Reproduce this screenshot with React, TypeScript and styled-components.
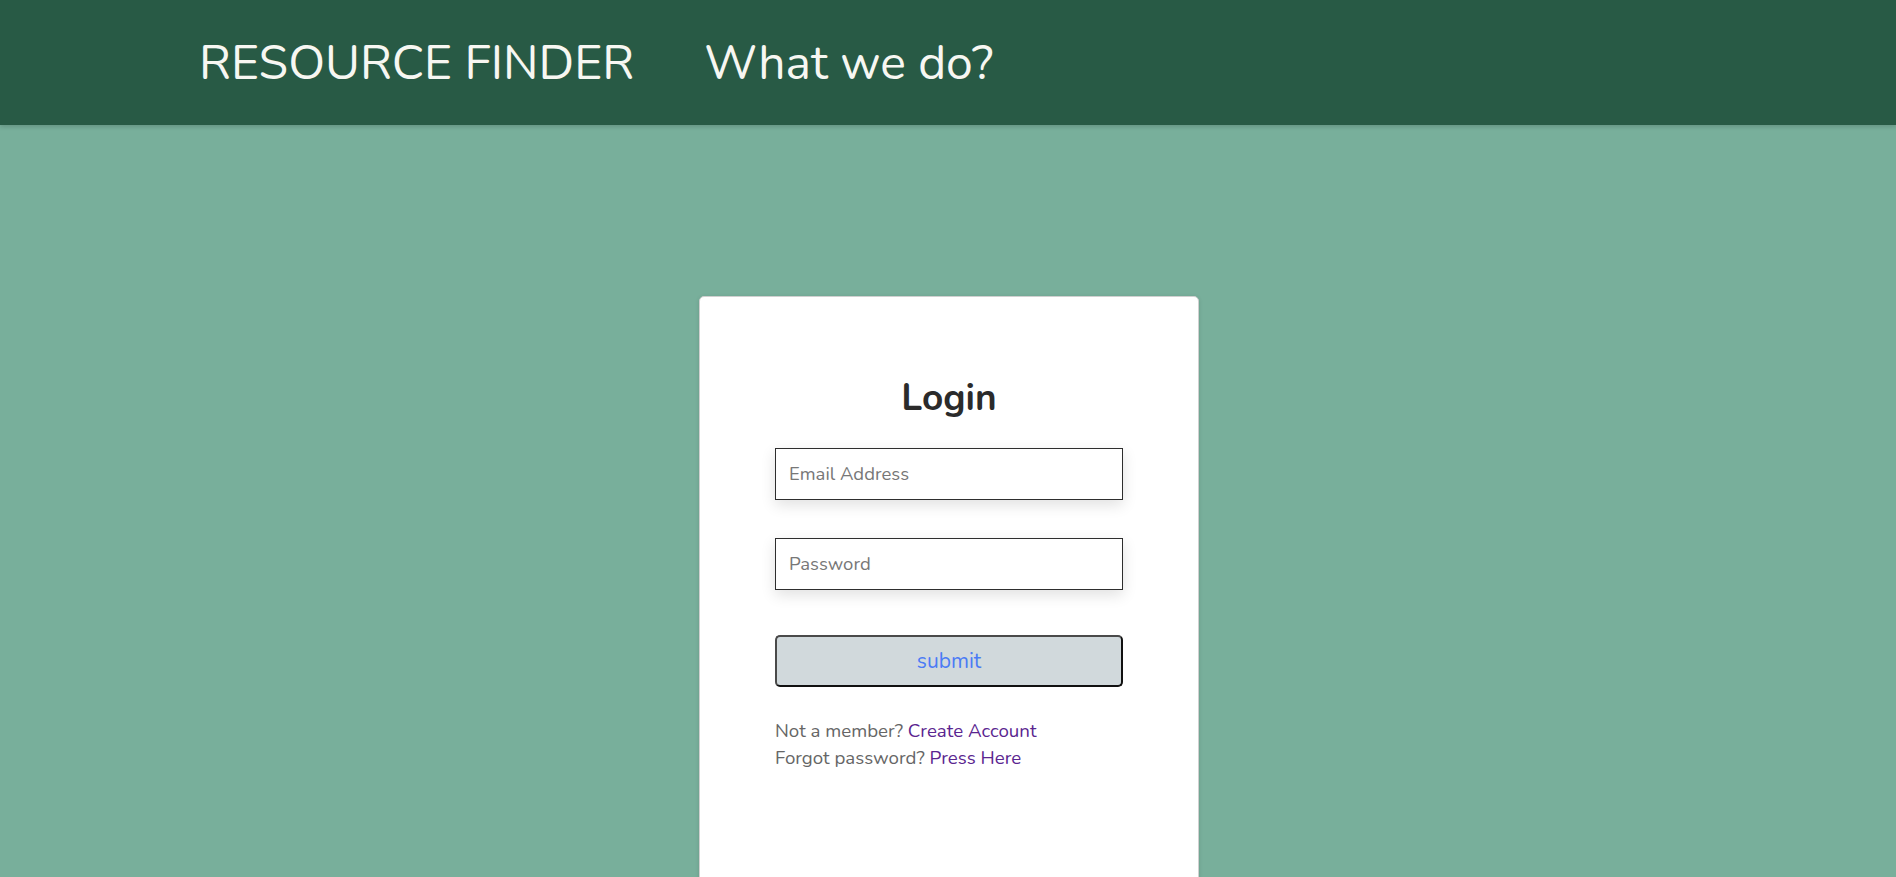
import React from "react";
import styled, { createGlobalStyle } from "styled-components";

const Global = createGlobalStyle`
  html, body {
    margin: 0;
    padding: 0;
    background: #78af9b;
    font-family: "Nunito", "Open Sans", "Noto Sans", sans-serif;
    overflow: hidden;
  }
  * { box-sizing: border-box; }
`;

const Page = styled.div`
  min-height: 100vh;
  background: #78af9b;
`;

const Header = styled.header`
  height: 125px;
  background: #285a45;
  display: flex;
  align-items: center;
  gap: 70px;
  padding-left: 199px;
  box-shadow: 0 2px 4px rgba(0, 0, 0, 0.15);
`;

const NavItem = styled.a`
  color: #f7f7f2;
  font-size: 48px;
  font-weight: 400;
  text-decoration: none;
  line-height: 1;
  white-space: nowrap;
`;

const Main = styled.main`
  display: flex;
  justify-content: center;
  padding-top: 171px;
  padding-left: 2px;
`;

const Card = styled.section`
  width: 500px;
  min-height: 700px;
  background: #ffffff;
  border: 1px solid #d0d0d0;
  border-radius: 5px;
  padding: 77px 75px 40px;
  box-shadow: 0 1px 4px rgba(0, 0, 0, 0.12);
`;

const Title = styled.h1`
  margin: 0 0 26px;
  text-align: center;
  font-size: 37px;
  font-weight: 700;
  line-height: 48px;
  color: #2b2b2b;
`;

const Input = styled.input<{ $gap?: number }>`
  display: block;
  width: 100%;
  height: 52px;
  margin: 0 0 ${(p) => p.$gap ?? 0}px;
  padding: 0 13px;
  border: 1px solid #2e2e2e;
  border-radius: 0;
  background: #fff;
  font-family: inherit;
  font-size: 18.5px;
  color: #333;
  box-shadow: 0 5px 14px rgba(0, 0, 0, 0.12);
  outline: none;
  &::placeholder {
    color: #777;
  }
`;

const Submit = styled.button`
  display: block;
  width: 100%;
  height: 52px;
  background: #d1d9dc;
  border: 2px solid #111;
  border-top-color: #4a4a4a;
  border-left-color: #4a4a4a;
  border-radius: 5px;
  font-family: inherit;
  font-size: 21px;
  color: #4b7bf5;
  cursor: pointer;
`;

const Links = styled.div`
  margin-top: 31px;
  font-size: 18.7px;
  line-height: 26.5px;
  color: #666;
`;

const Line = styled.div``;

const Link = styled.a`
  color: #5a2590;
  text-decoration: none;
`;

export default function App() {
  return (
    <Page>
      <Global />
      <Header>
        <NavItem href="#">RESOURCE FINDER</NavItem>
        <NavItem href="#">What we do?</NavItem>
      </Header>
      <Main>
        <Card>
          <Title>Login</Title>
          <Input type="email" placeholder="Email Address" $gap={38} />
          <Input type="password" placeholder="Password" $gap={45} />
          <Submit type="button">submit</Submit>
          <Links>
            <Line>
              Not a member? <Link href="#">Create Account</Link>
            </Line>
            <Line>
              Forgot password? <Link href="#">Press Here</Link>
            </Line>
          </Links>
        </Card>
      </Main>
    </Page>
  );
}
